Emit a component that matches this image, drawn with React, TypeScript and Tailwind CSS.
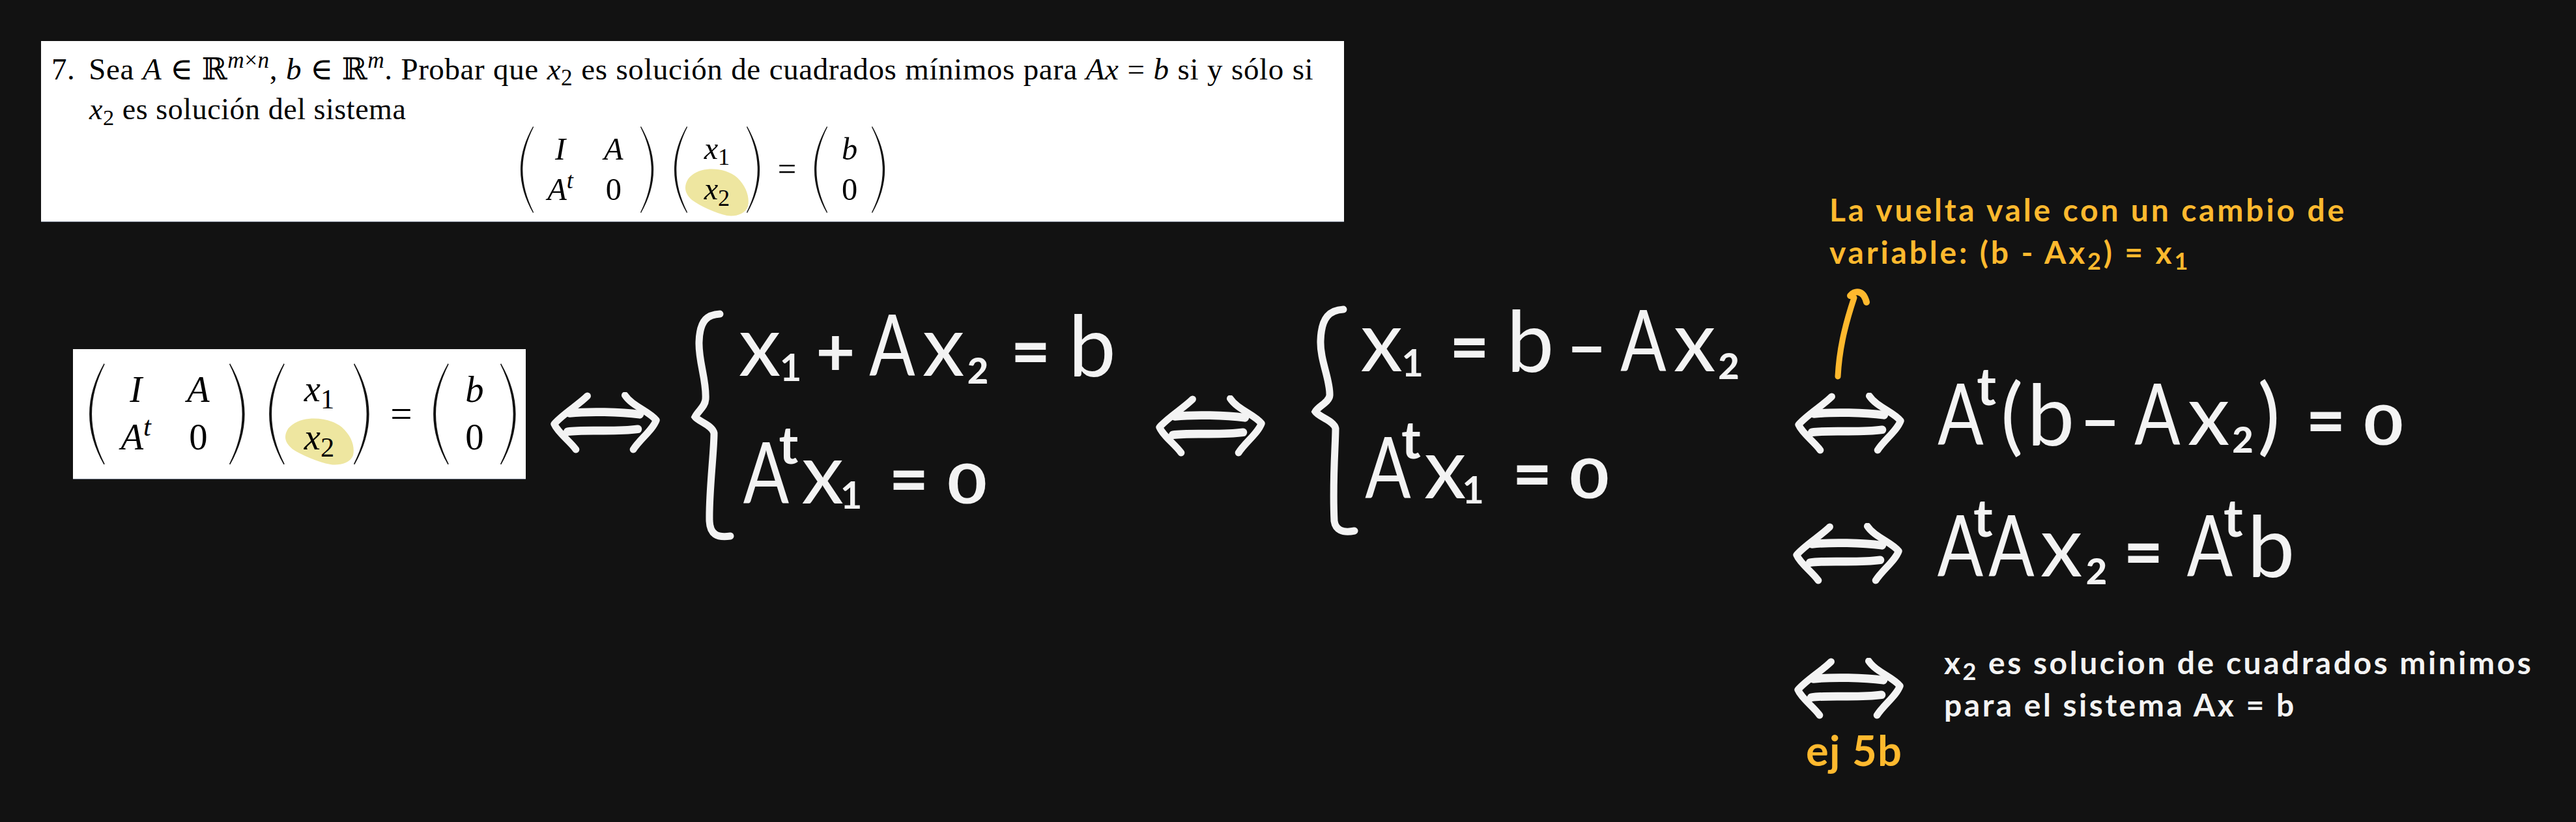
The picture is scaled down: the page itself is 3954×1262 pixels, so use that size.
import React from 'react';

const ink = "font-['Lato',sans-serif] text-[#f3f3f3]";
const row = `absolute flex items-baseline whitespace-nowrap text-[130px] leading-none ${ink}`;
const cell = 'flex justify-center';
const letterA = `${cell} scale-x-[0.8]`;
const supT = `${cell} -translate-y-[61px] text-[80px] font-bold`;
const subOne = `${cell} translate-y-[8px] text-[58px] font-bold`;
const subTwo = `${cell} translate-y-[12px] text-[56px] font-black`;
const equals = `${cell} text-[104px] font-black`;
const zero = `${cell} scale-x-[1.25] text-[84px] font-bold`;

const Paren = ({ flip }: { flip?: boolean }) => (
  <svg viewBox="0 0 22 133" preserveAspectRatio="none" className={`h-[3.02em] w-[0.48em] shrink-0 ${flip ? '-scale-x-100' : ''}`}>
    <path d="M21 0C8 22 1 44 1 66.5C1 89 8 111 21 133L22 132C11 111 4.5 89 4.5 66.5C4.5 44 11 22 22 1Z" fill="#111" />
  </svg>
);

const Blob = ({ className }: { className: string }) => (
  <svg viewBox="0 0 100 73" preserveAspectRatio="none" className={`absolute left-1/2 -translate-x-1/2 ${className}`}>
    <path d="M35 1C50-1 70 3 82 14C96 28 101 44 98 58C94 70 78 74 66 72C48 68 26 58 12 48C1 38-1 28 6 16C13 7 24 2 35 1Z" fill="#eee6a0" />
  </svg>
);

const Matrix = ({ blob, className }: { blob: string; className: string }) => (
  <div className={`flex items-center font-['Liberation_Serif','DejaVu_Serif',serif] text-black ${className}`}>
    <Paren />
    <div className="grid w-[3.72em] grid-cols-2 text-center leading-[1.43em] [&>*]:text-[1.1em]">
      <i>I</i>
      <i>A</i>
      <span><i>A</i><sup className="italic">t</sup></span>
      <span>0</span>
    </div>
    <Paren flip />
    <div className="ml-[0.68em]"><Paren /></div>
    <div className="flex w-[2.07em] flex-col text-center leading-[1.43em]">
      <span className="text-[1.1em]"><i>x</i><sub>1</sub></span>
      <span className="relative">
        <Blob className={blob} />
        <span className="relative text-[1.1em]"><i>x</i><sub>2</sub></span>
      </span>
    </div>
    <Paren flip />
    <div className="w-[1.86em] text-center"><span className="text-[1.15em]">=</span></div>
    <Paren />
    <div className="flex w-[1.55em] flex-col text-center leading-[1.43em] [&>*]:text-[1.1em]">
      <i>b</i>
      <span>0</span>
    </div>
    <Paren flip />
  </div>
);

const DoubleArrow = ({ className }: { className: string }) => (
  <svg viewBox="0 0 172 96" fill="none" stroke="#f3f3f3" strokeLinecap="round" strokeLinejoin="round" className={`absolute h-[94px] w-[172px] ${className}`}>
    <path d="M58 6C44 20 20 34 6 50C12 64 30 76 40 90" strokeWidth="11" />
    <path d="M117 5C128 22 155 30 166 44C160 60 140 74 130 90" strokeWidth="11" />
    <path d="M30 33C60 30 110 31 140 35" strokeWidth="13" />
    <path d="M27 62C55 58 100 63 137 58" strokeWidth="13" />
  </svg>
);

export default function App() {
  return (
    <div className="relative h-[1262px] w-[3954px] overflow-hidden bg-[#121212]">
      {/* enunciado */}
      <div className="absolute left-[63px] top-[63px] h-[278px] w-[2000px] border-b border-gray-500 bg-white pl-[16px] pt-[12px] font-['Liberation_Serif','DejaVu_Serif',serif] text-[44px] leading-[62px] text-black">
        <p className="whitespace-nowrap text-[47px] tracking-[0.012em] [word-spacing:0.014em]">
          7.<span className="ml-[8px]"> Sea</span> <i>A</i> ∈ ℝ<sup><i>m</i>×<i>n</i></sup>, <i>b</i> ∈ ℝ<sup><i>m</i></sup>. Probar que <i>x</i><sub>2</sub> es solución de cuadrados mínimos para <i>Ax</i> = <i>b</i> si y sólo si
        </p>
        <p className="whitespace-nowrap pl-[58px] text-[46px] tracking-[0.012em]">
          <i>x</i><sub>2</sub> es solución del sistema
        </p>
        <Matrix className="-mt-[5px] ml-[719px] text-[44px]" blob="top-0 h-[1.66em] w-[2.27em]" />
      </div>

      <div className="absolute left-[112px] top-[536px] flex h-[200px] w-[695px] items-center border-b border-gray-500 bg-white pl-[24px]">
        <Matrix className="text-[51.5px]" blob="top-[0.14em] h-[1.4em] w-[2.1em]" />
      </div>

      <DoubleArrow className="left-[843px] top-[602px]" />
      <DoubleArrow className="left-[1772px] top-[607px]" />
      <DoubleArrow className="left-[2753px] top-[603px]" />
      <DoubleArrow className="left-[2750px] top-[803px]" />
      <DoubleArrow className="left-[2752px] top-[1010px]" />

      {/* primer sistema */}
      <svg viewBox="0 0 70 360" fill="none" stroke="#f3f3f3" strokeWidth="11" strokeLinecap="round" className="absolute left-[1060px] top-[475px] h-[360px] w-[70px]">
        <path d="M45 7C28 8 14 14 13 50C12 80 25 110 23 138C22 150 12 155 7 165C12 172 34 178 36 190C36 220 28 280 29 325C30 345 40 351 61 348" />
      </svg>
      <div className={`${row} left-[1137px] top-[462px]`}>
        <span className={`${cell} w-[58px]`}>x</span>
        <span className={`${subOne} ml-[12px] w-[13px]`}>1</span>
        <span className={`${cell} ml-[35px] w-[55px] text-[104px] font-bold`}>+</span>
        <span className={`${letterA} ml-[22px] w-[75px]`}>A</span>
        <span className={`${cell} ml-[14px] w-[54px]`}>x</span>
        <span className={`${subTwo} ml-[10px] w-[32px]`}>2</span>
        <span className={`${equals} ml-[36px] w-[58px]`}>=</span>
        <span className={`${cell} ml-[34px] w-[63px]`}>b</span>
      </div>
      <div className={`${row} left-[1144px] top-[658px]`}>
        <span className={`${letterA} w-[64px]`}>A</span>
        <span className={`${supT} -ml-[13px] w-[31px]`}>t</span>
        <span className={`${cell} ml-[9px] w-[55px]`}>x</span>
        <span className={`${subOne} ml-[10px] w-[13px]`}>1</span>
        <span className={`${equals} ml-[52px] w-[60px]`}>=</span>
        <span className={`${zero} ml-[27px] w-[65px]`}>0</span>
      </div>

      {/* segundo sistema */}
      <svg viewBox="0 0 80 360" fill="none" stroke="#f3f3f3" strokeWidth="11" strokeLinecap="round" className="absolute left-[2012px] top-[468px] h-[360px] w-[80px]">
        <path d="M50 7C30 8 16 18 15 55C14 85 30 115 29 139C28 150 12 155 7 164C12 172 36 178 38 190C38 215 33 270 36 332C38 345 48 351 67 347" />
      </svg>
      <div className={`${row} left-[2091px] top-[455px]`}>
        <span className={`${cell} w-[59px]`}>x</span>
        <span className={`${subOne} ml-[11px] w-[14px]`}>1</span>
        <span className={`${equals} ml-[53px] w-[55px]`}>=</span>
        <span className={`${cell} ml-[35px] w-[62px]`}>b</span>
        <span className={`${cell} ml-[29px] w-[53px] text-[100px] font-bold`}>−</span>
        <span className={`${letterA} ml-[23px] w-[75px]`}>A</span>
        <span className={`${cell} ml-[15px] w-[52px]`}>x</span>
        <span className={`${subTwo} ml-[10px] w-[33px]`}>2</span>
      </div>
      <div className={`${row} left-[2098px] top-[650px]`}>
        <span className={`${letterA} w-[65px]`}>A</span>
        <span className={`${supT} -ml-[13px] w-[32px]`}>t</span>
        <span className={`${cell} ml-[8px] w-[56px]`}>x</span>
        <span className={`${subOne} ml-[8px] w-[14px]`}>1</span>
        <span className={`${equals} ml-[54px] w-[60px]`}>=</span>
        <span className={`${zero} ml-[25px] w-[65px]`}>0</span>
      </div>

      {/* columna derecha */}
      <p className="absolute left-[2808px] top-[289px] whitespace-nowrap font-['Lato',sans-serif] text-[48px] font-bold leading-[65px] tracking-[0.08em] text-[#ffb92e]">
        La vuelta vale con un cambio de<br />
        variable: (b - Ax<sub>2</sub>) = x<sub>1</sub>
      </p>
      <svg viewBox="0 0 70 150" fill="none" stroke="#ffb92e" strokeLinecap="round" className="absolute left-[2810px] top-[440px] h-[150px] w-[70px]">
        <path d="M11 138C13 100 20 65 36 17" strokeWidth="9" />
        <path d="M30 14C36 6 50 4 55 24" strokeWidth="10" />
      </svg>

      <div className={`${row} left-[2977px] top-[568px]`}>
        <span className={`${letterA} w-[65px]`}>A</span>
        <span className={`${supT} -ml-[6px] w-[26px]`}>t</span>
        <span className={`${cell} ml-[14px] w-[24px]`}>(</span>
        <span className={`${cell} ml-[16px] w-[64px]`}>b</span>
        <span className={`${cell} ml-[17px] w-[53px] text-[100px] font-bold`}>−</span>
        <span className={`${letterA} ml-[23px] w-[77px]`}>A</span>
        <span className={`${cell} ml-[15px] w-[50px]`}>x</span>
        <span className={`${subTwo} ml-[10px] w-[35px]`}>2</span>
        <span className={`${cell} ml-[2px] w-[41px]`}>)</span>
        <span className={`${equals} ml-[37px] w-[60px]`}>=</span>
        <span className={`${zero} ml-[27px] w-[63px]`}>0</span>
      </div>

      <div className={`${row} left-[2976px] top-[770px]`}>
        <span className={`${letterA} w-[66px]`}>A</span>
        <span className={`${supT} -ml-[14px] w-[32px]`}>t</span>
        <span className={`${letterA} -ml-[10px] w-[75px]`}>A</span>
        <span className={`${cell} ml-[15px] w-[48px]`}>x</span>
        <span className={`${subTwo} ml-[12px] w-[36px]`}>2</span>
        <span className={`${equals} ml-[24px] w-[60px]`}>=</span>
        <span className={`${letterA} ml-[40px] w-[64px]`}>A</span>
        <span className={`${supT} -ml-[12px] w-[32px]`}>t</span>
        <span className={`${cell} ml-[12px] w-[60px]`}>b</span>
      </div>

      <p className="absolute left-[2984px] top-[984px] whitespace-nowrap font-['Lato',sans-serif] text-[48px] font-bold leading-[65px] tracking-[0.073em] text-[#f3f3f3]">
        x<sub>2</sub> es solucion de cuadrados minimos<br />
        para el sistema Ax = b
      </p>
      <span className="absolute left-[2772px] top-[1119px] whitespace-nowrap font-['Lato',sans-serif] text-[65px] font-bold leading-none tracking-[0.02em] text-[#ffb92e]">
        ej 5b
      </span>
    </div>
  );
}
